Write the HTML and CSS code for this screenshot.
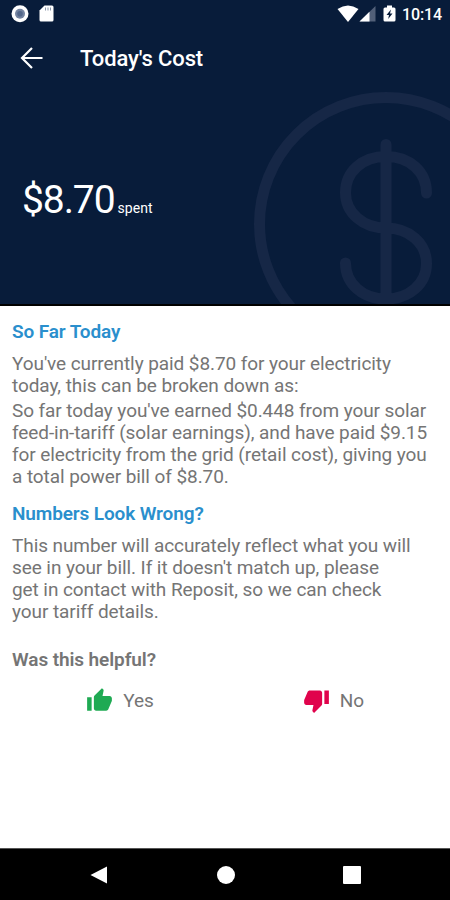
FILE: index.html
```html
<!DOCTYPE html>
<html lang="en">
<head>
    <meta charset="UTF-8">
    <meta name="viewport" content="width=device-width, initial-scale=1.0">
    <title>Today's Cost</title>
    <link rel="stylesheet" href="styles.css">
</head>
<body>
    <div class="screen">
        <header class="header">
            <svg class="coin" width="196" height="224" viewBox="254 80 196 224">
                <circle cx="386" cy="224" r="126.5"/>
                <path d="M386 144.500V304M426.500 193C426.500 172 410 156.500 386 156.500S345.500 172 345.500 192.500S363 228 386 228S426.500 243 426.500 263.500S409 299 386 299S345.500 284 345.500 263"/>
            </svg>
            <div class="status-bar">
                <svg width="60" height="28" viewBox="0 0 60 28">
                    <circle cx="20" cy="13.800" r="8.500" fill="#fff"/>
                    <circle cx="20" cy="13.800" r="5" fill="#7484a0"/>
                    <circle cx="20" cy="13.800" r="2.800" fill="#53678a"/>
                    <path d="M44.500 5.500H52q1.500 0 1.500 1.500V20q0 1.500-1.500 1.500H41q-1.500 0-1.500-1.500V10.500z" fill="#fff"/>
                    <path d="M45.500 7.500v3M48 7.500v3M50.500 7.500v3" stroke="#8b97aa"/>
                </svg>
                <div class="status-right">
                    <svg width="62" height="28" viewBox="336 0 62 28">
                        <path d="M337.500 9Q348 2 358.500 9L348 22z" fill="#fff"/>
                        <path d="M375.500 6V21.500H359.500z" fill="#526079"/>
                        <path d="M369.500 11.800V21.500H359.500z" fill="#fff"/>
                        <path d="M387 5.500h5v2h2q1.500 0 1.500 1.500V20q0 1.500-1.500 1.500h-9q-1.500 0-1.500-1.500V9q0-1.500 1.500-1.500h2z" fill="#fff"/>
                        <path d="M391 9.500L386.500 15h2.500l-.800 4 4.300-5.500h-2.500z" fill="#081c3a"/>
                    </svg>
                    <span class="clock">10:14</span>
                </div>
            </div>
            <div class="app-bar">
                <svg class="back" width="24" height="24" viewBox="0 0 24 24">
                    <path d="M12 2L2 12L12 22M2.500 12H22.500"/>
                </svg>
                <h1 class="title">Today's Cost</h1>
            </div>
            <div class="amount">
                <span class="amount-value">$8.70</span>
                <span class="amount-label">spent</span>
            </div>
        </header>

        <main class="content">
            <h2 class="heading">So Far Today</h2>
            <p class="text">You've currently paid $8.70 for your electricity<br>today, this can be broken down as:</p>
            <p class="text">So far today you've earned $0.448 from your solar<br>feed-in-tariff (solar earnings), and have paid $9.15<br>for electricity from the grid (retail cost), giving you<br>a total power bill of $8.70.</p>
            <h2 class="heading second">Numbers Look Wrong?</h2>
            <p class="text">This number will accurately reflect what you will<br>see in your bill. If it doesn't match up, please<br>get in contact with Reposit, so we can check<br>your tariff details.</p>
            <h3 class="question">Was this helpful?</h3>
            <div class="answers">
                <div class="answer">
                    <svg width="27" height="27" viewBox="0 0 24 24" fill="#1faa53">
                        <path d="M1 21h4V9H1v12zm22-11c0-1.100-.900-2-2-2h-6.310l.950-4.570.030-.320c0-.410-.170-.790-.440-1.060L14.170 1 7.590 7.590C7.220 7.950 7 8.450 7 9v10c0 1.100.900 2 2 2h9c.830 0 1.540-.500 1.840-1.220l3.020-7.050c.090-.230.140-.470.140-.730v-2z"/>
                    </svg>
                    <span>Yes</span>
                </div>
                <div class="answer">
                    <svg width="27" height="27" viewBox="0 0 24 24" fill="#e0034c">
                        <path d="M15 3H6c-.830 0-1.540.500-1.840 1.220l-3.020 7.050c-.090.230-.140.470-.140.730v2c0 1.100.900 2 2 2h6.310l-.950 4.570-.030.320c0 .410.170.790.440 1.060L9.830 23l6.590-6.590c.360-.360.580-.860.580-1.410V5c0-1.100-.900-2-2-2zm4 0v12h4V3h-4z"/>
                    </svg>
                    <span>No</span>
                </div>
            </div>
        </main>

        <nav class="nav-bar">
            <svg width="18" height="18" viewBox="0 0 18 18"><path d="M.500 9L17 .500V17.500z"/></svg>
            <svg width="18" height="18" viewBox="0 0 18 18"><circle cx="9" cy="9" r="9"/></svg>
            <svg width="18" height="18" viewBox="0 0 18 18"><rect width="18" height="18" rx="1"/></svg>
        </nav>
    </div>
</body>
</html>
```

FILE: styles.css
```css
* {
    box-sizing: border-box;
}
body {
    margin: 0;
    font-family: Roboto, sans-serif;
    background: #fff;
}
.screen {
    display: flex;
    flex-direction: column;
    width: 450px;
    height: 900px;
    overflow: hidden;
}
.header {
    position: relative;
    height: 306px;
    background: #081c3a;
    border-bottom: 2px solid #000;
    color: #fff;
}
/* watermark behind the header text */
.coin {
    position: absolute;
    right: 0;
    bottom: 0;
    fill: none;
    stroke: #162746;
    stroke-width: 11;
    stroke-linecap: round;
}
.status-bar {
    display: flex;
    justify-content: space-between;
    height: 28px;
}
.status-right {
    display: flex;
    padding-right: 8px;
}
.clock {
    width: 44px;
    padding-left: 4px;
    font-size: 16px;
    font-weight: 500;
    line-height: 29px;
    letter-spacing: -0.1px;
    white-space: nowrap;
}
.app-bar {
    display: flex;
    align-items: center;
    height: 60px;
    padding-left: 20px;
}
.back {
    fill: none;
    stroke: #fff;
    stroke-width: 2.2;
}
.title {
    margin: 0 0 0 36px;
    font-size: 22px;
    font-weight: 500;
    letter-spacing: -0.12px;
}
.amount {
    display: flex;
    align-items: baseline;
    padding: 88px 0 0 22px;
}
.amount-value {
    font-size: 39px;
    line-height: 48px;
    letter-spacing: -1.1px;
}
.amount-label {
    margin-left: 3px;
    font-size: 14px;
    letter-spacing: 0.1px;
}
.content {
    flex: 1;
    padding: 15px 12px 0;
    color: #757575;
}
.heading {
    margin: 0 0 10px;
    font-size: 19px;
    font-weight: 600;
    line-height: 22px;
    letter-spacing: -0.12px;
    color: #2a8fcd;
}
.text {
    margin: 0 0 3px;
    font-size: 19px;
    line-height: 22px;
    letter-spacing: -0.08px;
    white-space: nowrap;
}
.second {
    margin-top: 15px;
}
.question {
    margin: 26px 0 0;
    font-size: 19px;
    font-weight: 600;
    line-height: 22px;
    letter-spacing: -0.1px;
}
.answers {
    display: grid;
    grid-template-columns: 1fr 1fr;
    margin-top: 16px;
    padding-left: 2px;
    font-size: 19px;
}
.answer {
    display: flex;
    align-items: center;
    justify-content: center;
    gap: 10px;
}
.answer:last-child {
    padding-left: 3px;
}
.nav-bar {
    display: flex;
    align-items: center;
    justify-content: space-between;
    height: 52px;
    padding: 0 89px 0 90px;
    background: #000;
    border-top: 1px solid #555;
    fill: #fff;
}
```
